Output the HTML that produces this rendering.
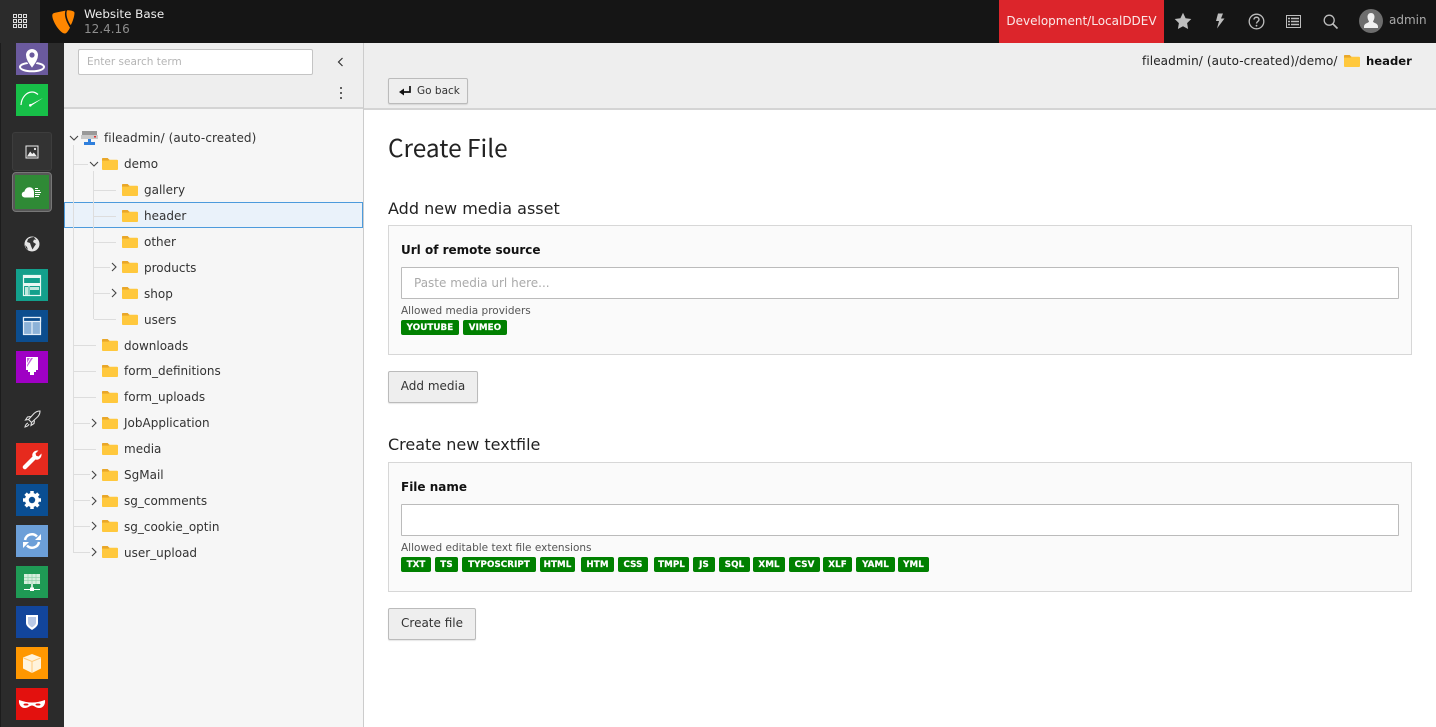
<!DOCTYPE html>
<html lang="en"><head><meta charset="utf-8"><title>Create File</title>
<style>
*{box-sizing:border-box}
html,body{margin:0;padding:0;width:1436px;height:727px;overflow:hidden;background:#fff}
body{position:relative;font-family:"DejaVu Sans","Liberation Sans",sans-serif;color:#333;font-size:12px}
.a{position:absolute;white-space:nowrap}
svg{position:absolute;display:block;overflow:visible}
.m{position:absolute;left:16px;width:32px;height:32px}
.t{position:absolute;font-size:12px;line-height:16px;color:#333;white-space:nowrap}
.box{position:absolute;left:388px;width:1024px;background:#fafafa;border:1px solid #d7d7d7}
.inp{position:absolute;left:401px;width:998px;height:32px;background:#fff;border:1px solid #bbb;border-radius:1px}
.btn{position:absolute;background:#eee;border:1px solid #bbb;border-radius:2px;font-size:12px;color:#333;text-align:center;box-shadow:0 1px 1px rgba(0,0,0,.1)}
.b{position:absolute;height:15px;top:557px;background:#008000;color:#fff;font:bold 8.700px/16px "DejaVu Sans",sans-serif;text-align:center;border-radius:2px;letter-spacing:.1px;-webkit-text-stroke:.2px #fff}
.l{position:absolute;background:#ddd}
</style></head><body>
<svg width="0" height="0" style="position:absolute"><defs>
<symbol id="f" viewBox="0 0 16 12"><path d="M0 1C0 .4.400 0 1 0h4.600l1.600 1.700H15c.6 0 1 .4 1 1V11c0 .6-.4 1-1 1H1c-.6 0-1-.4-1-1z" fill="#ffc83d"/><path d="M0 2.600h6.500L8 1.700H7.200L5.600 0H1C.4 0 0 .4 0 1z" fill="#e9a72a"/></symbol>
<symbol id="d" viewBox="0 0 10 10"><path d="M1 3l4 4 4-4" fill="none" stroke="#444" stroke-width="1.100"/></symbol>
<symbol id="r" viewBox="0 0 10 10"><path d="M3 1l4 4-4 4" fill="none" stroke="#444" stroke-width="1.100"/></symbol>
</defs></svg>

<!-- sidebar -->
<div class="a" style="left:0;top:0;width:64px;height:727px;background:#2b2b2b"></div>
<div class="a" style="left:0;top:0;width:1px;height:727px;background:#1c1c1c"></div>

<!-- modules -->
<div class="m" style="top:43px;background:#6b5a9e"><svg width="32" height="32" viewBox="0 0 32 32"><ellipse cx="16" cy="24" rx="12" ry="4.300" fill="none" stroke="#fff" stroke-width="2"/><path d="M16 25.500c-4-5.500-6.500-9-6.500-13.500a6.500 6.500 0 0 1 13 0c0 4.500-2.500 8-6.500 13.500z" fill="#fff" stroke="#6b5a9e" stroke-width="1"/><circle cx="16" cy="12" r="2.600" fill="#6b5a9e"/></svg></div>
<div class="m" style="top:84px;background:#17bf48"><svg width="32" height="32" viewBox="0 0 32 32"><path d="M5 21C5.500 13 11 8 16 8c2 0 4 .7 6 2.500" fill="none" stroke="#fff" stroke-width="1.200"/><path d="M14 20.800l13-6.800-12.500 8.200z" fill="#fff"/><circle cx="14.300" cy="21.300" r="1.300" fill="#fff"/></svg></div>

<div class="a" style="left:12px;top:132px;width:40px;height:39px;background:#333;border:1px solid #3d3d3d;border-radius:3px"></div>
<svg style="left:25px;top:145px" width="14" height="14" viewBox="0 0 14 14"><rect x=".5" y=".5" width="13" height="13" fill="#eee"/><rect x="1.500" y="1.500" width="11" height="11" fill="#333"/><path d="M2 11.500l3.200-5 2 2.500 1.600-1.500 3.200 4z" fill="#eee"/><circle cx="10" cy="4" r="1.100" fill="#eee"/></svg>

<div class="a" style="left:12px;top:172px;width:40px;height:40px;background:#575757;border:1px solid #777;border-radius:4px"></div>
<div class="a" style="left:15px;top:175px;width:34px;height:34px;background:#2f8a36"></div>
<svg style="left:22px;top:187px" width="20" height="11" viewBox="0 0 20 11"><path d="M3 10.500a3 3 0 0 1-.5-6C3 2 5 .3 7.500.3 10 .3 12 2.300 12 5v5.500z" fill="#fff"/><path d="M13 1.500h3M13 3.500h5M13 5.500h6M13 7.500h5M13 9.500h4" stroke="#fff" stroke-width="1.100"/></svg>

<svg style="left:24px;top:236px" width="16" height="16" viewBox="0 0 16 16"><circle cx="8" cy="8" r="7.500" fill="#e4e4e4"/><path d="M7 1.500L4 3 3 6l3 1 1 3 1.500 3.500L10 11l2-3-3-2 1-2.500 2 .5-2-3zM1 9l2 2 1 3-2-2z" fill="#333"/></svg>

<div class="m" style="top:269px;background:#13a08c"><svg width="32" height="32" viewBox="0 0 32 32"><rect x="7.500" y="6.500" width="17" height="20" fill="none" stroke="#e8f8f4" stroke-width="1.200"/><rect x="7" y="6" width="18" height="3" fill="#e8f8f4"/><path d="M7 14h18v3H7z" fill="#e8f8f4"/><path d="M9 18h3v8H9zM14 18h9v3h-9z" fill="#bfe9df"/><path d="M13 17v10" stroke="#e8f8f4"/></svg></div>
<div class="m" style="top:310px;background:#0c4d8e"><svg width="32" height="32" viewBox="0 0 32 32"><rect x="7.500" y="7.500" width="17" height="17" fill="#8cb2d8" stroke="#e4eef8" stroke-width="1.200"/><rect x="7.500" y="7.500" width="17" height="4" fill="#0c4d8e" stroke="#e4eef8" stroke-width="1.200"/><path d="M16 11v13" stroke="#e4eef8" stroke-width="1.200"/></svg></div>
<div class="m" style="top:351px;background:#9f00c4"><svg width="32" height="32" viewBox="0 0 32 32"><rect x="10" y="6" width="12" height="13" fill="#fff"/><path d="M11 7h3l-3 5zM15 7h2l-6 9v-2z" fill="#c566dd"/><rect x="12" y="19" width="8" height="2" fill="#fff"/><rect x="14" y="21" width="4" height="3" fill="#fff"/></svg></div>

<svg style="left:23px;top:410px" width="18" height="18" viewBox="0 0 18 18"><path d="M5.500 9.500L11 3.500c1.500-1.500 4-2.500 6-2.500 0 2-1 4.500-2.500 6L8.500 12.500zM5.500 9.500l-3 .5 2-3 3-.5M8.500 12.500l-.5 3 3-2 .5-3M5 13c-1.500.5-2.500 2-3 4 2-.5 3.500-1.500 4-3" fill="none" stroke="#e0e0e0" stroke-width="1.100"/></svg>

<div class="m" style="top:443px;background:#e62a1e"><svg width="32" height="32" viewBox="0 0 32 32"><path d="M8 24l9.500-9.500c-1-3 1.500-6.500 6-6L20.500 11.500l.7 2.300 2.300.7 3-3c.5 4.500-3 7-6 6L11 27c-2 1-4-1-3-3z" fill="#fff" transform="translate(-1 -1)"/></svg></div>
<div class="m" style="top:484px;background:#0a4e92"><svg width="32" height="32" viewBox="0 0 32 32"><circle cx="16" cy="16" r="7" fill="#fff"/><path d="M16 7v18M7 16h18M9.600 9.600l12.800 12.800M22.400 9.600L9.600 22.400" stroke="#fff" stroke-width="3.500"/><circle cx="16" cy="16" r="3.200" fill="#0a4e92"/></svg></div>
<div class="m" style="top:525px;background:#6c9fd8"><svg width="32" height="32" viewBox="0 0 32 32"><path d="M9 15a7 7 0 0 1 12-3.500M23 17a7 7 0 0 1-12 3.500" fill="none" stroke="#fff" stroke-width="2.500"/><path d="M25 9v6h-6zM7 23v-6h6z" fill="#fff"/></svg></div>
<div class="m" style="top:566px;background:#1f9a55"><svg width="32" height="32" viewBox="0 0 32 32"><rect x="8" y="8" width="16" height="10" fill="#d6eedd"/><path d="M8 11.300h16M8 14.600h16M12 8v10M16 8v10M20 8v10" stroke="#8acfa5" stroke-width=".6"/><path d="M16 18v4" stroke="#fff" stroke-width="1.500"/><path d="M8 23.500h16" stroke="#fff"/><rect x="14" y="21.500" width="4" height="3.500" fill="#fff"/></svg></div>
<div class="m" style="top:606px;background:#12459b"><svg width="32" height="32" viewBox="0 0 32 32"><path d="M10 9h12v8c0 3-3 5-6 7-3-2-6-4-6-7z" fill="#fff"/><path d="M12 11h8v6c0 1.500-2.500 3.500-4 4.500-1.500-1-4-3-4-4.500z" fill="#b9c9e6"/></svg></div>
<div class="m" style="top:647px;background:#ff9700"><svg width="32" height="32" viewBox="0 0 32 32"><path d="M16 7l9 3.500v11L16 26l-9-4.500v-11z" fill="#fff3dc"/><path d="M7.500 11l8.500 3.500 8.500-3.500M16 14.500V26" fill="none" stroke="#ffc97a" stroke-width="1"/></svg></div>
<div class="m" style="top:688px;background:#e3110e"><svg width="32" height="32" viewBox="0 0 32 32"><path d="M3 12c4 1.500 9 2.500 13 2.500s9-1 13-2.500c.5 4-1.500 8-6 8-3 0-5-2.500-7-2.500S12 20 9 20c-4.500 0-6.500-4-6-8z" fill="#fff"/><ellipse cx="10" cy="16.500" rx="2.500" ry="1" fill="#e3110e"/><ellipse cx="22" cy="16.500" rx="2.500" ry="1" fill="#e3110e"/></svg></div>

<!-- topbar -->
<div class="a" style="left:0;top:0;width:1436px;height:43px;background:#151515"></div>
<div class="a" style="left:0;top:0;width:40px;height:43px;background:#2b2b2b"></div>
<svg style="left:13px;top:14px" width="14" height="14" viewBox="0 0 14 14"><g fill="none" stroke="#ddd" stroke-width="1"><rect x=".5" y=".5" width="3" height="3"/><rect x="5.500" y=".5" width="3" height="3"/><rect x="10.500" y=".5" width="3" height="3"/><rect x=".5" y="5.500" width="3" height="3"/><rect x="5.500" y="5.500" width="3" height="3"/><rect x="10.500" y="5.500" width="3" height="3"/><rect x=".5" y="10.500" width="3" height="3"/><rect x="5.500" y="10.500" width="3" height="3"/><rect x="10.500" y="10.500" width="3" height="3"/></g></svg>
<svg style="left:52px;top:10px" width="23" height="24" viewBox="0 0 23 24"><path d="M.3 6C.2 4 1 3.300 3 2.800L13.500.6c-1.200 3-.5 8 2.500 13.500 1 2 1.500 2.800 2 3.500-1.500 3-3.500 5.900-5 5.900C8 23.500.6 11.500.3 6z" fill="#ff8700"/><path d="M15.500.3c2 0 7 .5 7 2.500 0 3.500-2 9.500-3.700 12.300-2.500-3-4.500-8.500-4.300-12 .1-1.600.3-2.600 1-2.800z" fill="#ff8700"/></svg>
<div class="a" style="left:84px;top:6px;font-size:11.900px;line-height:16px;color:#eee">Website Base</div>
<div class="a" style="left:84px;top:21px;font-size:12px;line-height:16px;color:#8d8d8d">12.4.16</div>
<div class="a" style="left:999px;top:0;width:165px;height:43px;background:#dc252b;color:#fbe9e9;font-size:12px;line-height:43px;text-align:center">Development/LocalDDEV</div>
<svg style="left:1174px;top:12px" width="18" height="18" viewBox="0 0 18 18"><path d="M9 .8l2.600 5.400 5.700.8-4.200 4.100 1 5.900L9 14.200 3.900 17l1-5.900L.7 7l5.700-.8z" fill="#bdbdbd"/></svg>
<svg style="left:1214px;top:13px" width="12" height="16" viewBox="0 0 12 16"><path d="M4 .5h5L7 5.500h3.500L3 15.500l2-7.500H2z" fill="#bdbdbd"/></svg>
<svg style="left:1248px;top:13px" width="17" height="17" viewBox="0 0 17 17"><circle cx="8.500" cy="8.500" r="7.300" fill="none" stroke="#bdbdbd" stroke-width="1.300"/><path d="M6 6.500c0-3 5-3 5 0 0 2-2.500 2-2.500 4" fill="none" stroke="#bdbdbd" stroke-width="1.400"/><circle cx="8.500" cy="12.700" r=".9" fill="#bdbdbd"/></svg>
<svg style="left:1286px;top:15px" width="15" height="13" viewBox="0 0 15 13"><rect x=".5" y=".5" width="14" height="12" fill="none" stroke="#bdbdbd"/><path d="M2 3.500h2M5 3.500h8M2 6.500h2M5 6.500h8M2 9.500h2M5 9.500h8" stroke="#bdbdbd" stroke-width="1.400"/></svg>
<svg style="left:1323px;top:14px" width="15" height="15" viewBox="0 0 15 15"><circle cx="6.200" cy="6.200" r="5" fill="none" stroke="#bdbdbd" stroke-width="1.300"/><path d="M10 10l4.500 4.500" stroke="#bdbdbd" stroke-width="1.600"/></svg>
<div class="a" style="left:1359px;top:9px;width:24px;height:24px;border-radius:50%;background:#6d6d6d;overflow:hidden"><svg style="left:5px;top:4px" width="14" height="17" viewBox="0 0 14 17"><path d="M7 0c2.200 0 3.500 1.700 3.500 4 0 2-1 3.500-1.500 4.500 0 1.500 5 1.500 5 5V15H0v-1.500c0-3.500 5-3.500 5-5C4.500 7.500 3.500 6 3.500 4 3.500 1.700 4.800 0 7 0z" fill="#f0f0f0"/></svg></div>
<div class="a" style="left:1389px;top:12px;font-size:12px;line-height:16px;color:#a9a9a9">admin</div>

<!-- tree panel -->
<div class="a" style="left:64px;top:43px;width:300px;height:684px;background:#f6f6f6;border-right:1px solid #ccc"></div>
<div class="a" style="left:64px;top:43px;width:299px;height:66px;background:#eee;border-bottom:2px solid #d4d4d4"></div>
<div class="a" style="left:78px;top:49px;width:235px;height:26px;background:#fff;border:1px solid #c4c4c4;border-radius:2px;font-size:10.500px;line-height:25px;padding-left:8px;color:#b4b4b4">Enter search term</div>
<svg style="left:337px;top:57px" width="7" height="10" viewBox="0 0 7 10"><path d="M5.500 1L1.500 5l4 4" fill="none" stroke="#333" stroke-width="1.200"/></svg>
<svg style="left:339px;top:86px" width="4" height="14" viewBox="0 0 4 14"><circle cx="2" cy="2" r="1" fill="#333"/><circle cx="2" cy="7" r="1" fill="#333"/><circle cx="2" cy="12" r="1" fill="#333"/></svg>

<!-- header row highlight -->
<div class="a" style="left:64px;top:202px;width:299px;height:26px;background:#eaf2fa;border:1px solid #4d9bdc"></div>

<!-- tree lines -->
<div class="l" style="left:73px;top:145px;width:1px;height:408px"></div>
<div class="l" style="left:93px;top:171px;width:1px;height:148px"></div>
<div class="l" style="left:74px;top:164px;width:14px;height:1px"></div>
<div class="l" style="left:94px;top:190px;width:22px;height:1px"></div>
<div class="l" style="left:94px;top:216px;width:22px;height:1px"></div>
<div class="l" style="left:94px;top:242px;width:22px;height:1px"></div>
<div class="l" style="left:94px;top:267px;width:16px;height:1px"></div>
<div class="l" style="left:94px;top:293px;width:16px;height:1px"></div>
<div class="l" style="left:94px;top:319px;width:22px;height:1px"></div>
<div class="l" style="left:74px;top:345px;width:22px;height:1px"></div>
<div class="l" style="left:74px;top:371px;width:22px;height:1px"></div>
<div class="l" style="left:74px;top:397px;width:22px;height:1px"></div>
<div class="l" style="left:74px;top:423px;width:16px;height:1px"></div>
<div class="l" style="left:74px;top:449px;width:22px;height:1px"></div>
<div class="l" style="left:74px;top:474px;width:16px;height:1px"></div>
<div class="l" style="left:74px;top:500px;width:16px;height:1px"></div>
<div class="l" style="left:74px;top:526px;width:16px;height:1px"></div>
<div class="l" style="left:74px;top:552px;width:16px;height:1px"></div>

<!-- tree chevrons -->
<svg style="left:69px;top:133px" width="10" height="10"><use href="#d"/></svg>
<svg style="left:89px;top:159px" width="10" height="10"><use href="#d"/></svg>
<svg style="left:109px;top:262px" width="10" height="10"><use href="#r"/></svg>
<svg style="left:109px;top:288px" width="10" height="10"><use href="#r"/></svg>
<svg style="left:89px;top:418px" width="10" height="10"><use href="#r"/></svg>
<svg style="left:89px;top:470px" width="10" height="10"><use href="#r"/></svg>
<svg style="left:89px;top:496px" width="10" height="10"><use href="#r"/></svg>
<svg style="left:89px;top:521px" width="10" height="10"><use href="#r"/></svg>
<svg style="left:89px;top:547px" width="10" height="10"><use href="#r"/></svg>

<!-- storage icon -->
<svg style="left:81px;top:130px" width="17" height="16" viewBox="0 0 17 16"><rect x="1" y="1" width="15" height="4" fill="#999"/><rect x="0" y="5" width="17" height="4" fill="#c9c9c9"/><rect x="13" y="6" width="2" height="1.500" fill="#d33"/><rect x="7" y="9" width="3" height="3" fill="#2f7fdc"/><rect x="3" y="12" width="11" height="3" fill="#2f7fdc"/></svg>

<!-- folders -->
<svg style="left:102px;top:158px" width="16" height="12"><use href="#f"/></svg>
<svg style="left:122px;top:184px" width="16" height="12"><use href="#f"/></svg>
<svg style="left:122px;top:210px" width="16" height="12"><use href="#f"/></svg>
<svg style="left:122px;top:236px" width="16" height="12"><use href="#f"/></svg>
<svg style="left:122px;top:261px" width="16" height="12"><use href="#f"/></svg>
<svg style="left:122px;top:287px" width="16" height="12"><use href="#f"/></svg>
<svg style="left:122px;top:313px" width="16" height="12"><use href="#f"/></svg>
<svg style="left:102px;top:339px" width="16" height="12"><use href="#f"/></svg>
<svg style="left:102px;top:365px" width="16" height="12"><use href="#f"/></svg>
<svg style="left:102px;top:391px" width="16" height="12"><use href="#f"/></svg>
<svg style="left:102px;top:417px" width="16" height="12"><use href="#f"/></svg>
<svg style="left:102px;top:443px" width="16" height="12"><use href="#f"/></svg>
<svg style="left:102px;top:469px" width="16" height="12"><use href="#f"/></svg>
<svg style="left:102px;top:495px" width="16" height="12"><use href="#f"/></svg>
<svg style="left:102px;top:520px" width="16" height="12"><use href="#f"/></svg>
<svg style="left:102px;top:546px" width="16" height="12"><use href="#f"/></svg>

<!-- tree labels -->
<div class="t" style="left:104px;top:130px;letter-spacing:.08px">fileadmin/ (auto-created)</div>
<div class="t" style="left:124px;top:156px">demo</div>
<div class="t" style="left:144px;top:182px">gallery</div>
<div class="t" style="left:144px;top:208px">header</div>
<div class="t" style="left:144px;top:234px">other</div>
<div class="t" style="left:144px;top:260px">products</div>
<div class="t" style="left:144px;top:286px">shop</div>
<div class="t" style="left:144px;top:312px">users</div>
<div class="t" style="left:124px;top:338px">downloads</div>
<div class="t" style="left:124px;top:363px">form_definitions</div>
<div class="t" style="left:124px;top:389px">form_uploads</div>
<div class="t" style="left:124px;top:415px">JobApplication</div>
<div class="t" style="left:124px;top:441px">media</div>
<div class="t" style="left:124px;top:467px">SgMail</div>
<div class="t" style="left:124px;top:493px">sg_comments</div>
<div class="t" style="left:124px;top:519px">sg_cookie_optin</div>
<div class="t" style="left:124px;top:545px">user_upload</div>

<!-- content toolbar -->
<div class="a" style="left:364px;top:43px;width:1072px;height:67px;background:#eee;border-bottom:2px solid #d4d4d4"></div>
<div class="a" style="left:1142px;top:53px;font-size:12px;line-height:16px;color:#222;letter-spacing:.1px">fileadmin/ (auto-created)/demo/</div>
<svg style="left:1344px;top:55px" width="16" height="12"><use href="#f"/></svg>
<div class="a" style="left:1366px;top:53px;font-size:11.600px;line-height:16px;font-weight:bold;color:#111">header</div>
<div class="btn" style="left:388px;top:78px;width:80px;height:26px"></div>
<div class="a" style="left:417px;top:83px;font-size:10.500px;line-height:16px;color:#333">Go back</div>
<svg style="left:399px;top:86px" width="12" height="10" viewBox="0 0 12 10"><path d="M11 0v6H4" fill="none" stroke="#111" stroke-width="1.700"/><path d="M5 2.500v7L0 6z" fill="#111"/></svg>

<!-- content -->
<div class="a" style="left:388px;top:132px;font:24.400px/32px 'Noto Sans CJK JP','Liberation Sans',sans-serif;color:#222">Create File</div>
<div class="a" style="left:388px;top:199px;font-size:16px;line-height:20px;color:#222">Add new media asset</div>

<div class="box" style="top:225px;height:130px"></div>
<div class="a" style="left:401px;top:242px;font-size:12px;line-height:16px;font-weight:bold;color:#111">Url of remote source</div>
<div class="inp" style="top:267px"></div>
<div class="a" style="left:414px;top:275px;font-size:12px;line-height:16px;color:#aaa">Paste media url here...</div>
<div class="a" style="left:401px;top:304px;font-size:10.500px;line-height:14px;color:#555">Allowed media providers</div>
<div class="b" style="left:401px;top:320px;width:58px">YOUTUBE</div>
<div class="b" style="left:463px;top:320px;width:44px">VIMEO</div>
<div class="btn" style="left:388px;top:371px;width:90px;height:32px;line-height:29px">Add media</div>

<div class="a" style="left:388px;top:435px;font-size:16px;line-height:20px;color:#222">Create new textfile</div>
<div class="box" style="top:462px;height:130px"></div>
<div class="a" style="left:401px;top:479px;font-size:12px;line-height:16px;font-weight:bold;color:#111">File name</div>
<div class="inp" style="top:504px"></div>
<div class="a" style="left:401px;top:541px;font-size:10.500px;line-height:14px;color:#555">Allowed editable text file extensions</div>
<div class="b" style="left:401px;width:30px">TXT</div>
<div class="b" style="left:435px;width:23px">TS</div>
<div class="b" style="left:462px;width:74px">TYPOSCRIPT</div>
<div class="b" style="left:540px;width:35px">HTML</div>
<div class="b" style="left:581px;width:33px">HTM</div>
<div class="b" style="left:618px;width:30px">CSS</div>
<div class="b" style="left:654px;width:35px">TMPL</div>
<div class="b" style="left:693px;width:22px">JS</div>
<div class="b" style="left:719px;width:31px">SQL</div>
<div class="b" style="left:753px;width:32px">XML</div>
<div class="b" style="left:789px;width:31px">CSV</div>
<div class="b" style="left:823px;width:29px">XLF</div>
<div class="b" style="left:856px;width:39px">YAML</div>
<div class="b" style="left:898px;width:31px">YML</div>
<div class="btn" style="left:388px;top:608px;width:88px;height:32px;line-height:29px">Create file</div>
</body></html>
